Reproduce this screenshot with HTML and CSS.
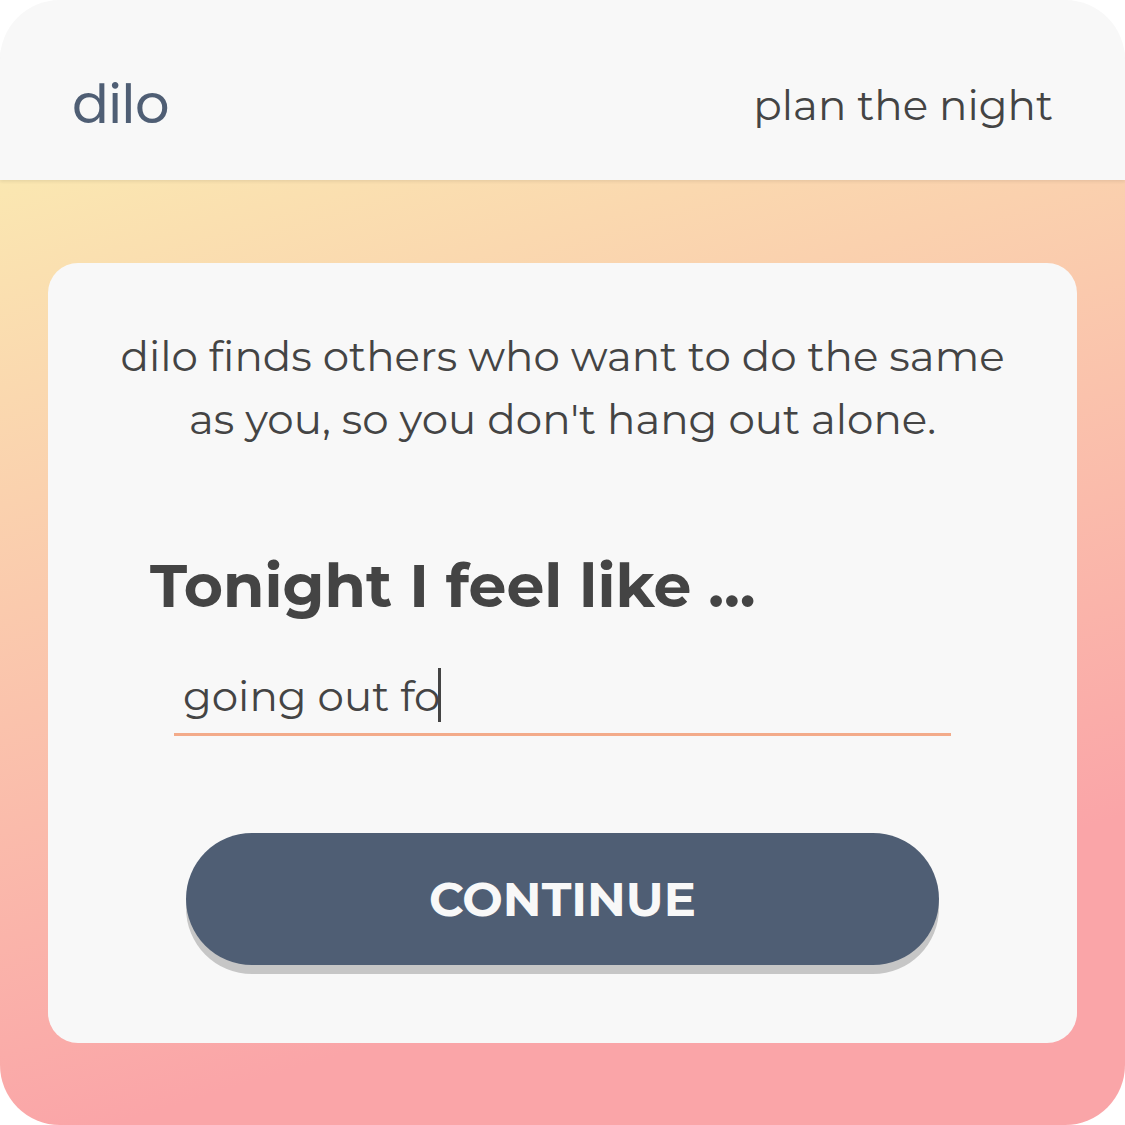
FILE: index.html
```html
<!DOCTYPE html>
<html lang="en">
<head>
<meta charset="utf-8">
<meta name="viewport" content="width=device-width, initial-scale=1">
<title>dilo</title>
<link rel="stylesheet" href="styles.css">
</head>
<body>
<div class="app">
  <header class="topbar">
    <a class="brand" href="#">dilo</a>
    <a class="nav-link" href="#">plan the night</a>
  </header>
  <main class="content">
    <form class="card">
      <p class="intro">dilo finds others who want to do the same as you, so you don't hang out alone.</p>
      <label class="prompt" for="plan">Tonight I feel like ...</label>
      <div class="field">
        <input class="field-input" id="plan" type="text" value="going out fo" autocomplete="off">
        <span class="caret"></span>
      </div>
      <button class="continue" type="button">CONTINUE</button>
    </form>
  </main>
</div>
</body>
</html>
```
FILE: styles.css
```css
* {
  box-sizing: border-box;
}

body {
  margin: 0;
  background: #fff;
  color: #444;
  font-family: Montserrat, Inter, "Open Sans", sans-serif;
  font-size: 42px;
  font-variant-ligatures: none;
}

.app {
  display: flex;
  flex-direction: column;
  min-height: 100vh;
  border-radius: 60px;
  overflow: hidden;
}

.topbar {
  position: relative;
  z-index: 1;
  display: flex;
  align-items: center;
  justify-content: space-between;
  height: 180px;
  padding: 30px 72px 0;
  background: #f8f8f8;
  box-shadow: 0 2px 3px rgba(0, 0, 0, 0.07);
}

.brand {
  padding-bottom: 2px;
  color: #4f5e74;
  font-family: Poppins, Montserrat, Inter, sans-serif;
  font-size: 54px;
  text-decoration: none;
}

.nav-link {
  color: #444;
  text-decoration: none;
}

.content {
  flex: 1;
  padding: 83px 48px 82px;
  background: linear-gradient(163deg, #fae7b1 0%, #faa5a8 76%);
}

.card {
  display: flex;
  flex-direction: column;
  padding: 62px 64px 78px;
  border-radius: 30px;
  background: #f8f8f8;
}

.intro {
  margin: 0;
  line-height: 63px;
  text-align: center;
}

.prompt {
  margin: 96px 38px 0;
  font-size: 60px;
  font-weight: 700;
  line-height: 78px;
}

.field {
  position: relative;
  height: 74px;
  margin: 37px 62px 0;
  padding: 0 9px;
  border-bottom: 3px solid #f3ab8a;
}

.field-input {
  width: 100%;
  height: 68px;
  padding: 0;
  border: 0;
  outline: 0;
  background: transparent;
  color: #444;
  font: inherit;
  font-variant-ligatures: none;
}

.caret {
  position: absolute;
  top: 6px;
  left: 264px;
  width: 3px;
  height: 54px;
  background: #444;
}

.continue {
  height: 132px;
  margin: 97px 74px 0;
  border: 0;
  border-radius: 66px;
  background: #4f5e74;
  box-shadow: 0 9px 0 #c6c6c6;
  color: #f8f8f8;
  font: inherit;
  font-size: 48px;
  font-weight: 700;
}
```
